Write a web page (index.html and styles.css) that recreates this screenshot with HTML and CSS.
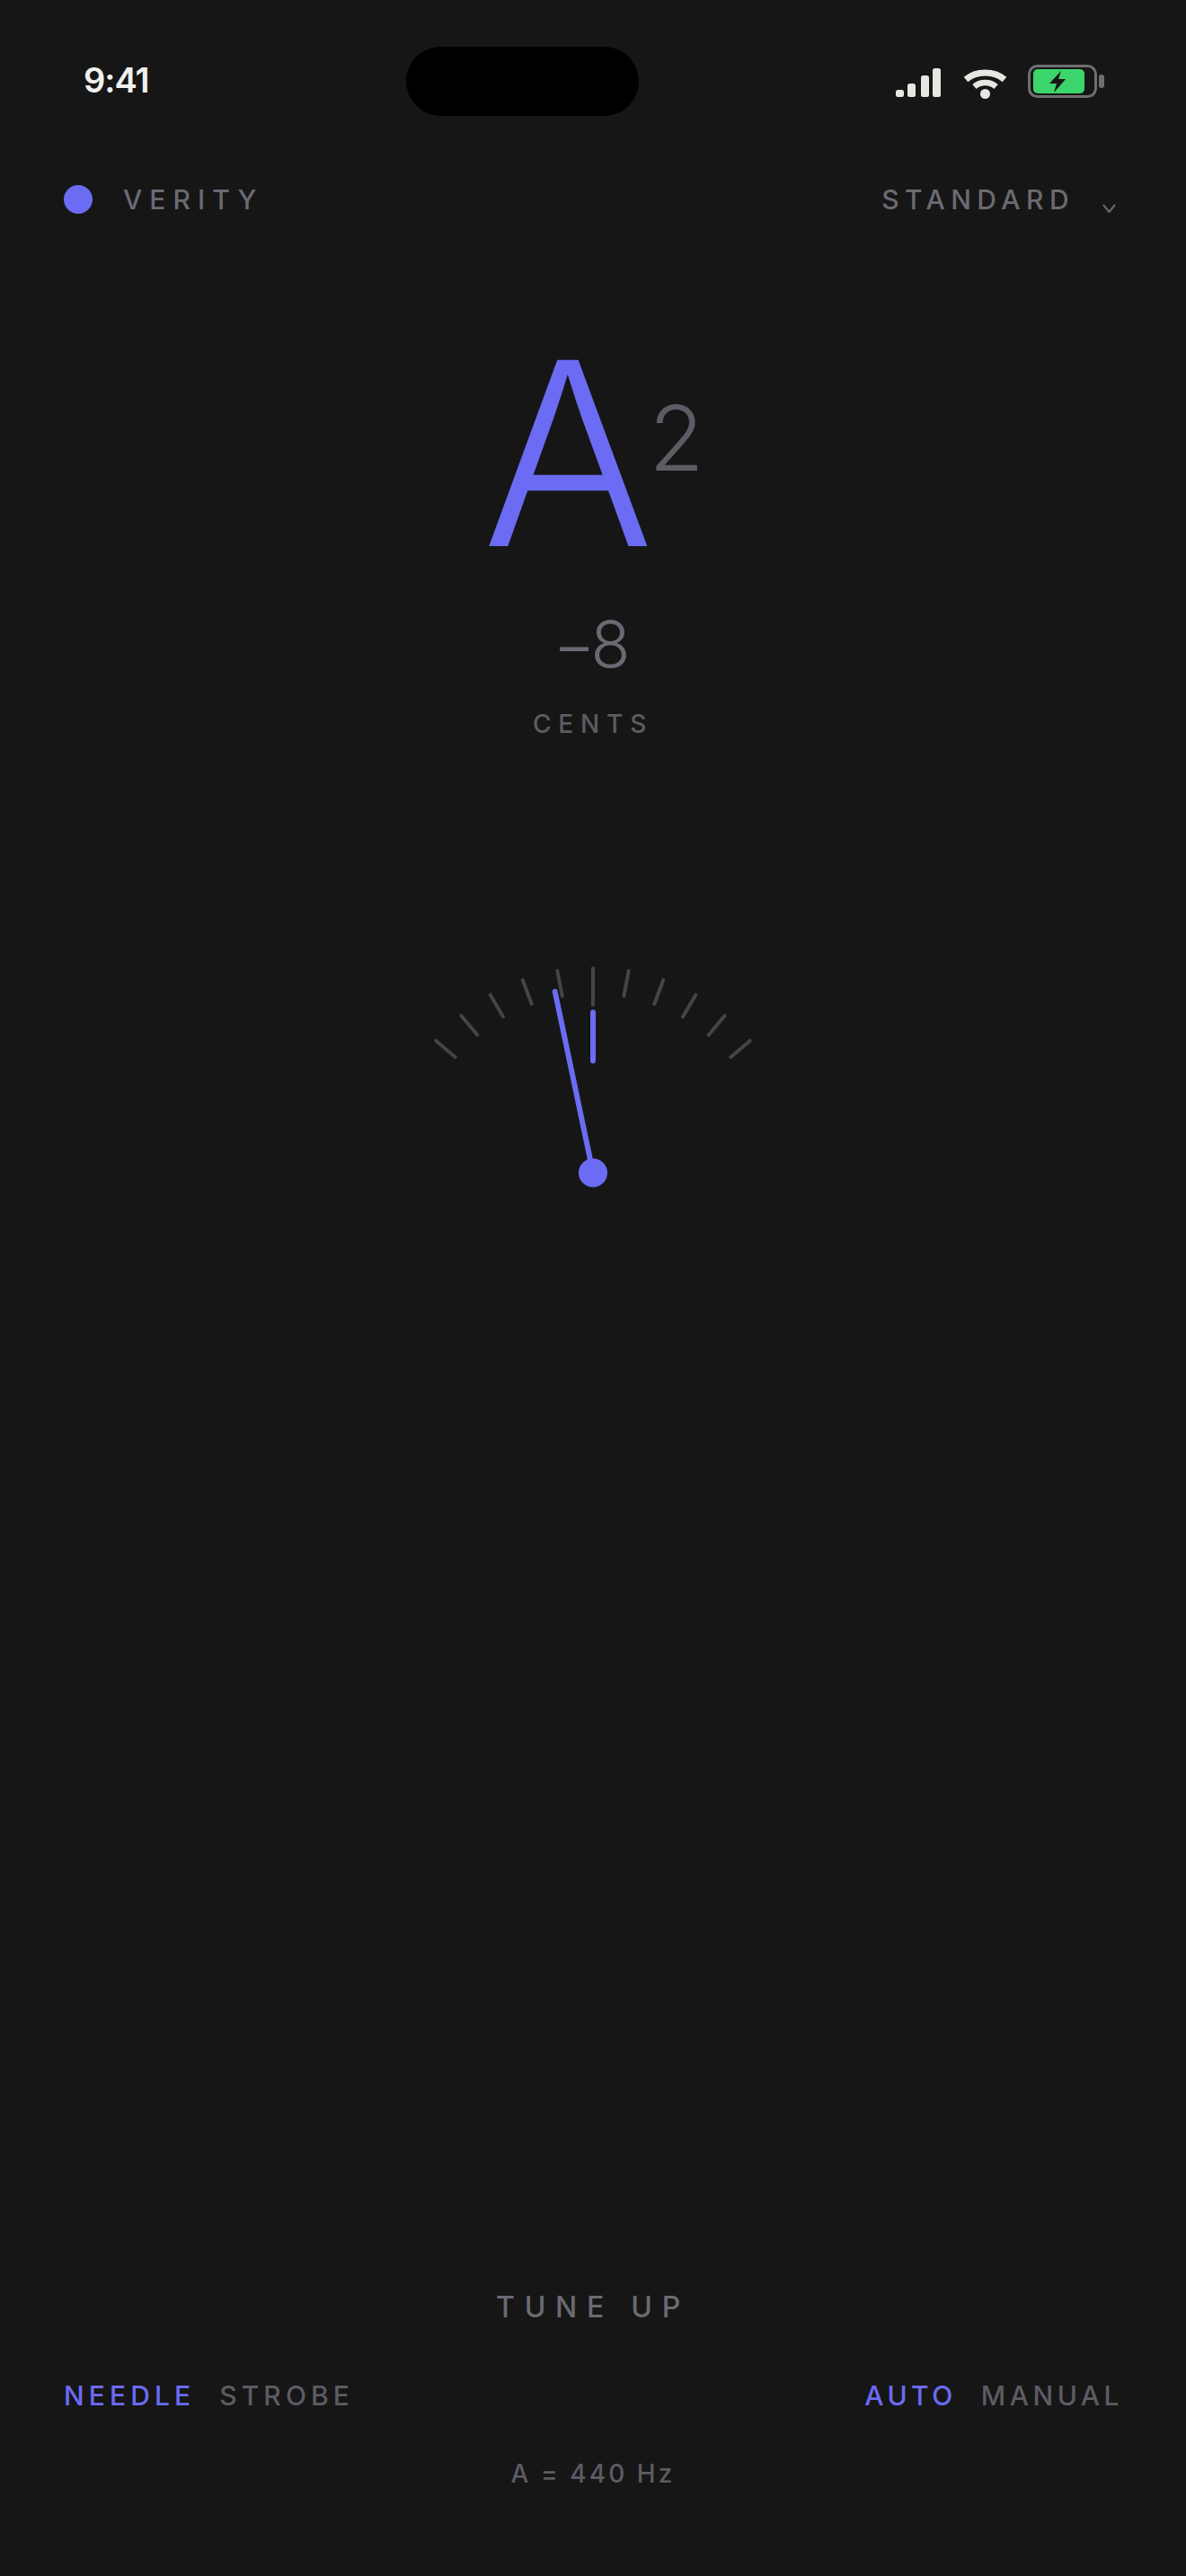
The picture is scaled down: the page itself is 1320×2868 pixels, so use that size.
FILE: index.html

```html
<!DOCTYPE html>
<html lang="en">
<head>
  <meta charset="UTF-8">
  <title>Verity Tuner</title>
  <link rel="stylesheet" href="styles.css">
</head>
<body>
  <div class="app">
    <div class="status-bar">
      <span class="time">9:41</span>
      <div class="island"></div>
      <div class="status-icons">
        <svg class="signal" width="50" height="32" viewBox="0 0 50 32">
          <rect x="0" y="24" width="9" height="8" rx="2.5"/>
          <rect x="13" y="17" width="9" height="15" rx="2.5"/>
          <rect x="28" y="8" width="9" height="24" rx="2.5"/>
          <rect x="41" y="0" width="9" height="32" rx="2.5"/>
        </svg>
        <svg class="wifi" width="49" height="35" viewBox="0 0 49 35">
          <path d="M3 13.5C14.500 3.500 34.500 3.500 46 13.500" fill="none" stroke-width="7"/>
          <path d="M12.500 21.500C19 15.500 30 15.500 36.500 21.500" fill="none" stroke-width="6.500"/>
          <circle cx="24.500" cy="29.500" r="5.500" class="wifi-dot"/>
        </svg>
        <svg class="battery" width="85" height="37" viewBox="0 0 85 37">
          <rect x="1.500" y="1.500" width="74" height="34" rx="9" fill="none" stroke="#6e6e6e" stroke-width="3"/>
          <rect x="6" y="5" width="57" height="27" rx="5" fill="#3cd56c"/>
          <path d="M37 7L24 21H32L29 31L42 16H34Z" fill="#161616"/>
          <rect x="79" y="11" width="6" height="15" rx="3" fill="#6e6e6e"/>
        </svg>
      </div>
    </div>

    <div class="top-row">
      <div class="brand">
        <span class="brand-dot"></span>
        <span class="label">VERITY</span>
      </div>
      <div class="tuning">
        <span class="label">STANDARD</span>
        <svg class="chevron" width="15" height="10" viewBox="0 0 15 10">
          <path d="M1 1L7.500 9L14 1" fill="none" stroke="#6b6a72" stroke-width="2"/>
        </svg>
      </div>
    </div>

    <div class="note">
      <span class="note-name">A</span>
      <span class="note-octave">2</span>
    </div>
    <div class="cents-value">&minus;8</div>
    <div class="cents-label">CENTS</div>

    <svg class="gauge" width="400" height="300" viewBox="0 0 400 300">
      <g class="ticks">
        <line x1="25.300" y1="108.700" x2="46.700" y2="127"/>
        <line x1="53.300" y1="80.700" x2="71.300" y2="102.300"/>
        <line x1="85.700" y1="57.700" x2="100" y2="82"/>
        <line x1="121.700" y1="41" x2="131.700" y2="67.700"/>
        <line x1="160.300" y1="30.700" x2="165.700" y2="59"/>
        <line x1="200" y1="28" x2="200" y2="69"/>
        <line x1="239.700" y1="30.700" x2="234.300" y2="59"/>
        <line x1="278.300" y1="41" x2="268.300" y2="67.700"/>
        <line x1="314.300" y1="57.700" x2="300" y2="82"/>
        <line x1="346.700" y1="80.700" x2="328.700" y2="102.300"/>
        <line x1="374.700" y1="108.700" x2="353.300" y2="127"/>
      </g>
      <line class="center-mark" x1="200" y1="77" x2="200" y2="131"/>
      <line class="needle" x1="157.700" y1="54" x2="200" y2="255.700"/>
      <circle class="pivot" cx="200" cy="255.700" r="16"/>
    </svg>

    <div class="bottom">
      <div class="action">TUNE UP</div>
      <div class="modes">
        <div class="mode-group">
          <span class="mode active">NEEDLE</span>
          <span class="mode">STROBE</span>
        </div>
        <div class="mode-group mode-group-right">
          <span class="mode active">AUTO</span>
          <span class="mode">MANUAL</span>
        </div>
      </div>
      <div class="reference">A = 440 Hz</div>
    </div>
  </div>
</body>
</html>
```

FILE: styles.css

```css
* {
  box-sizing: border-box;
}
body {
  margin: 0;
  background: #161616;
  color: #6b6a72;
  font-family: 'Inter', 'Liberation Sans', sans-serif;
}
.app {
  display: flex;
  flex-direction: column;
  height: 2868px;
  overflow: hidden;
}
.status-bar {
  display: flex;
  justify-content: space-between;
  align-items: center;
  height: 77px;
  margin-top: 52px;
  padding: 0 91px 0 93px;
  position: relative;
}
.time {
  color: #f0f0ee;
  font-size: 38px;
  font-weight: 600;
  letter-spacing: -1px;
  margin-top: -4px;
}
.island {
  position: absolute;
  left: 452px;
  top: 0;
  width: 259px;
  height: 77px;
  border-radius: 39px;
  background: #000;
}
.status-icons {
  display: flex;
  align-items: flex-end;
  gap: 25px;
  margin-top: -1px;
}
.signal {
  fill: #e6e6e2;
}
.wifi {
  stroke: #e6e6e2;
  margin-right: -2px;
  margin-bottom: -2px;
}
.wifi-dot {
  fill: #e6e6e2;
  stroke: none;
}
.battery {
  margin-bottom: -1px;
}
.top-row {
  display: flex;
  justify-content: space-between;
  align-items: center;
  margin-top: 77px;
  padding: 0 78px 0 71px;
  height: 32px;
}
.brand {
  display: flex;
  align-items: center;
  gap: 34px;
}
.brand-dot {
  width: 32px;
  height: 32px;
  border-radius: 50%;
  background: #6b6bf3;
}
.label {
  font-size: 30px;
  font-weight: 450;
  letter-spacing: 0.27em;
}
.tuning {
  display: flex;
  align-items: center;
  gap: 31px;
}
.tuning .label {
  letter-spacing: 0.215em;
}
.chevron {
  margin-top: 19px;
}
.note {
  display: flex;
  justify-content: center;
  align-items: flex-start;
  margin-top: 124px;
  height: 285px;
  line-height: 1;
}
.note-name {
  font-size: 285px;
  font-weight: 300;
  color: #6b6bf3;
}
.note-octave {
  font-size: 100px;
  font-weight: 300;
  color: #5d5b63;
  margin-top: 76px;
  margin-left: -6px;
}
.cents-value {
  font-size: 72px;
  font-weight: 300;
  text-align: center;
  line-height: 1;
  margin-top: 34px;
  letter-spacing: -5px;
  padding-right: 8px;
}
.cents-label {
  font-size: 28px;
  font-weight: 450;
  letter-spacing: 0.28em;
  text-align: center;
  color: #5d5b63;
  line-height: 1;
  margin-top: 39px;
}
.gauge {
  align-self: center;
  margin-top: 230px;
  flex: none;
}
.ticks line {
  stroke: #44444a;
  stroke-width: 4;
  stroke-linecap: round;
}
.center-mark,
.needle {
  stroke: #6b6bf3;
  stroke-width: 6;
  stroke-linecap: round;
}
.pivot {
  fill: #6b6bf3;
}
.bottom {
  margin-top: auto;
  padding: 0 71px 100px 71px;
}
.action {
  font-size: 32px;
  font-weight: 450;
  letter-spacing: 0.335em;
  text-align: center;
  line-height: 1;
}
.modes {
  display: flex;
  justify-content: space-between;
  margin-top: 67px;
  line-height: 1;
}
.mode-group {
  display: flex;
  gap: 27px;
}
.mode-group-right {
  margin-right: -1px;
}
.mode {
  font-size: 30px;
  font-weight: 450;
  letter-spacing: 0.17em;
  color: #5d5b63;
}
.mode-group-right .mode {
  letter-spacing: 0.15em;
}
.mode.active {
  color: #6b6bf3;
}
.reference {
  font-size: 28px;
  font-weight: 450;
  letter-spacing: 0.11em;
  text-align: center;
  line-height: 1;
  margin-top: 58px;
  color: #5d5b63;
}
```
